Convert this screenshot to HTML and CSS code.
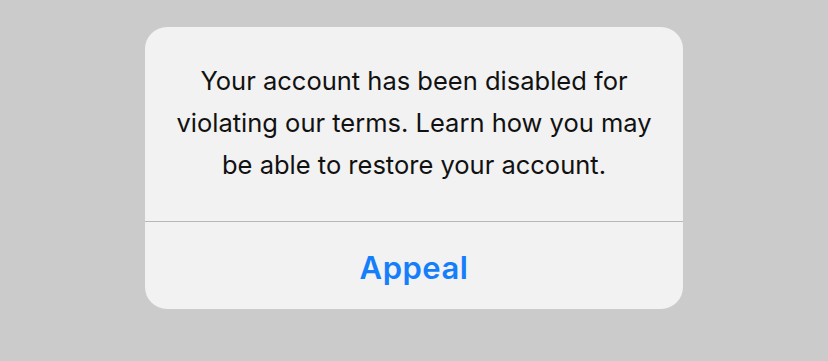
FILE: index.html
```html
<!DOCTYPE html>
<html lang="en">
<head>
<meta charset="utf-8">
<title>Account disabled</title>
<link rel="stylesheet" href="styles.css">
</head>
<body>
<div class="alert">
  <p class="message">Your account has been disabled for<br>violating our terms. Learn how you may<br>be able to restore your account.</p>
  <div class="divider"></div>
  <button class="action" type="button">Appeal</button>
</div>
</body>
</html>
```

FILE: styles.css
```css
html, body {
  margin: 0;
  padding: 0;
}
body {
  background: #cbcbcb;
  width: 828px;
  height: 361px;
  overflow: hidden;
  font-family: Inter, "Noto Sans", "Liberation Sans", sans-serif;
}
.alert {
  margin: 27px 0 0 145px;
  width: 538px;
  height: 282px;
  background: #f2f2f2;
  border-radius: 22px;
  display: flex;
  flex-direction: column;
  overflow: hidden;
}
.message {
  margin: 0;
  padding: 33px 0 0;
  height: 161px;
  text-align: center;
  font-size: 25.5px;
  line-height: 42px;
  color: #111;
}
.divider {
  height: 1px;
  background: #b8b8b8;
}
.action {
  flex: 1;
  border: 0;
  background: transparent;
  font-family: inherit;
  font-size: 31px;
  font-weight: 600;
  letter-spacing: 0.5px;
  color: #157efb;
  padding: 4px 0 0;
  display: flex;
  align-items: center;
  justify-content: center;
}
```
